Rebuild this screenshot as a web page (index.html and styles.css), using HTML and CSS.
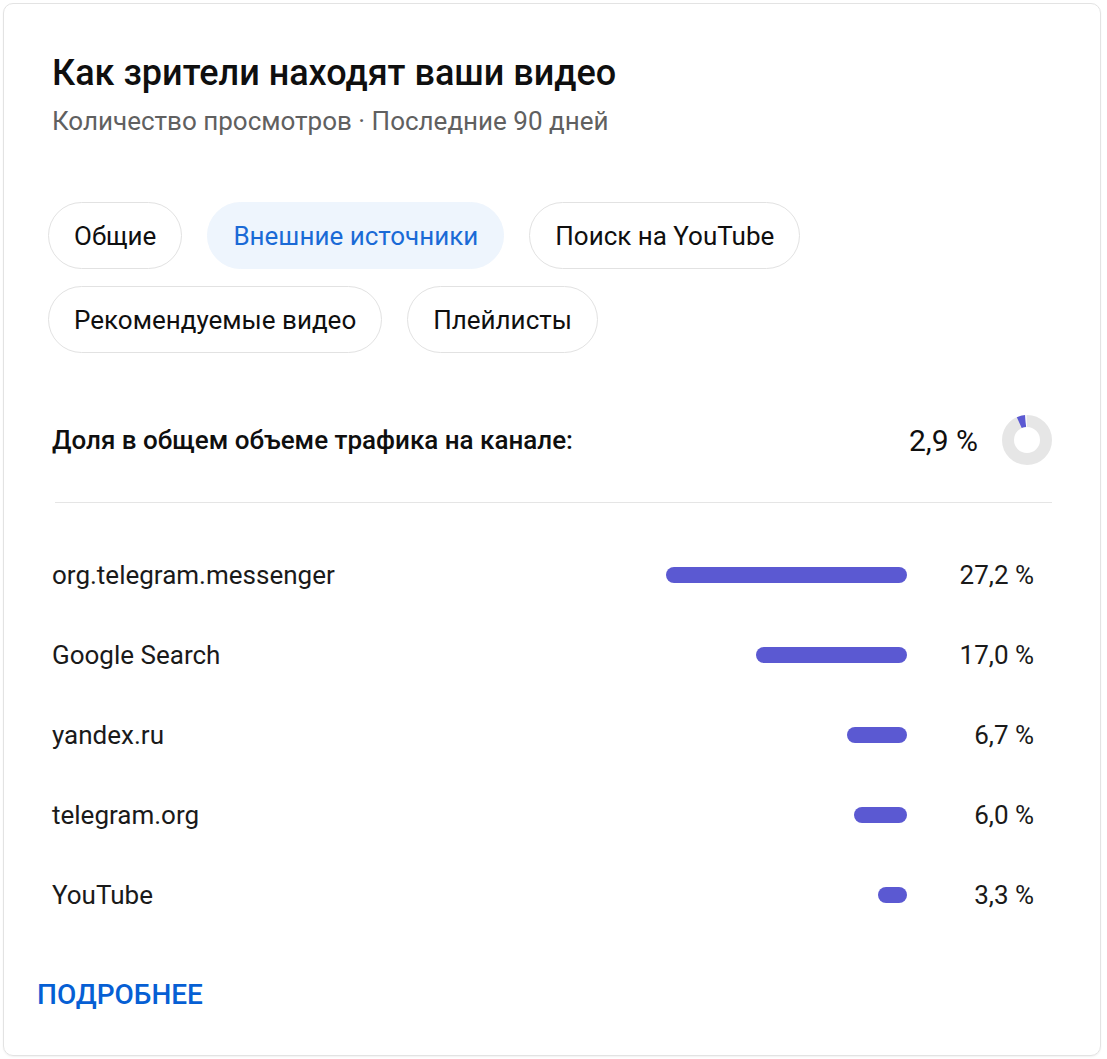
FILE: index.html
```html
<!DOCTYPE html>
<html lang="ru">
<head>
<meta charset="utf-8">
<title>Как зрители находят ваши видео</title>
<link rel="stylesheet" href="styles.css">
</head>
<body>
<section class="card">
  <h1 class="title">Как зрители находят ваши видео</h1>
  <p class="subtitle">Количество просмотров · Последние 90 дней</p>

  <div class="chips">
    <span class="chip">Общие</span>
    <span class="chip chip-active">Внешние источники</span>
    <span class="chip">Поиск на YouTube</span>
    <span class="chip">Рекомендуемые видео</span>
    <span class="chip">Плейлисты</span>
  </div>

  <div class="share">
    <span class="share-label">Доля в общем объеме трафика на канале:</span>
    <span class="share-value">2,9 %</span>
    <svg class="donut" width="50" height="50" viewBox="0 0 50 50">
      <circle cx="25" cy="25" r="19" fill="none" stroke="#e6e6e6" stroke-width="12"/>
      <path d="M17.27 7.64 A19 19 0 0 1 23.67 6.05" fill="none" stroke="#5b59d2" stroke-width="12"/>
      <path d="M23.67 6.05 A19 19 0 0 1 24.67 6.00" fill="none" stroke="#ffffff" stroke-width="12"/>
    </svg>
  </div>

  <hr class="divider">

  <ul class="rows">
    <li class="row"><span class="row-label">org.telegram.messenger</span><span class="bar-track"><span class="bar" style="width:241px"></span></span><span class="row-value">27,2 %</span></li>
    <li class="row"><span class="row-label">Google Search</span><span class="bar-track"><span class="bar" style="width:151px"></span></span><span class="row-value">17,0 %</span></li>
    <li class="row"><span class="row-label">yandex.ru</span><span class="bar-track"><span class="bar" style="width:60px"></span></span><span class="row-value">6,7 %</span></li>
    <li class="row"><span class="row-label">telegram.org</span><span class="bar-track"><span class="bar" style="width:53px"></span></span><span class="row-value">6,0 %</span></li>
    <li class="row"><span class="row-label">YouTube</span><span class="bar-track"><span class="bar" style="width:29px"></span></span><span class="row-value">3,3 %</span></li>
  </ul>

  <a class="more" href="#">ПОДРОБНЕЕ</a>
</section>
</body>
</html>
```

FILE: styles.css
```css
* { box-sizing: border-box; }

body {
  margin: 0;
  background: #ffffff;
  font-family: Roboto, "Noto Sans", "Liberation Sans", sans-serif;
  color: #0f0f0f;
}

.card {
  margin: 3px;
  width: 1098px;
  border: 1px solid #e3e3e3;
  border-radius: 10px;
  padding: 49px 48px 45px 48px;
  display: flex;
  flex-direction: column;
  box-shadow: 0 1px 2px rgba(0, 0, 0, 0.06);
}

.title {
  margin: 0;
  font-size: 36px;
  line-height: 40px;
  font-weight: 500;
  color: #0f0f0f;
}

.subtitle {
  margin: 12px 0 0;
  font-size: 26px;
  line-height: 32px;
  color: #606060;
}

.chips {
  margin: 65px 0 0 -4px;
  display: flex;
  flex-wrap: wrap;
  column-gap: 25px;
  row-gap: 17px;
  max-width: 780px;
}

.chip {
  height: 67px;
  padding: 0 25px;
  border: 1px solid #e2e2e2;
  border-radius: 34px;
  display: flex;
  align-items: center;
  font-size: 26px;
  color: #0f0f0f;
}

.chip-active {
  background: #eef5fd;
  border-color: #eef5fd;
  color: #1a6ad6;
}

.share {
  margin-top: 62px;
  height: 50px;
  display: flex;
  align-items: center;
}

.share-label {
  flex: 1;
  font-size: 26px;
  font-weight: 500;
}

.share-value {
  font-size: 30px;
  margin-right: 24px;
}

.donut { display: block; }

.divider {
  margin: 37px 0 0 3px;
  border: 0;
  height: 1px;
  background: #e5e5e5;
}

.rows {
  list-style: none;
  margin: 32px 0 0;
  padding: 0;
}

.row {
  height: 80px;
  display: flex;
  align-items: center;
  font-size: 26px;
  color: #1a1a1a;
}

.row-label { flex: 1; }

.bar-track {
  width: 260px;
  display: flex;
  justify-content: flex-end;
}

.bar {
  height: 16px;
  border-radius: 8px;
  background: #5b59d2;
}

.row-value {
  width: 145px;
  padding-right: 18px;
  text-align: right;
}

.more {
  margin: 45px 0 0 -15px;
  align-self: flex-start;
  font-size: 28px;
  line-height: 30px;
  font-weight: 500;
  color: #065fd4;
  text-decoration: none;
}
```
